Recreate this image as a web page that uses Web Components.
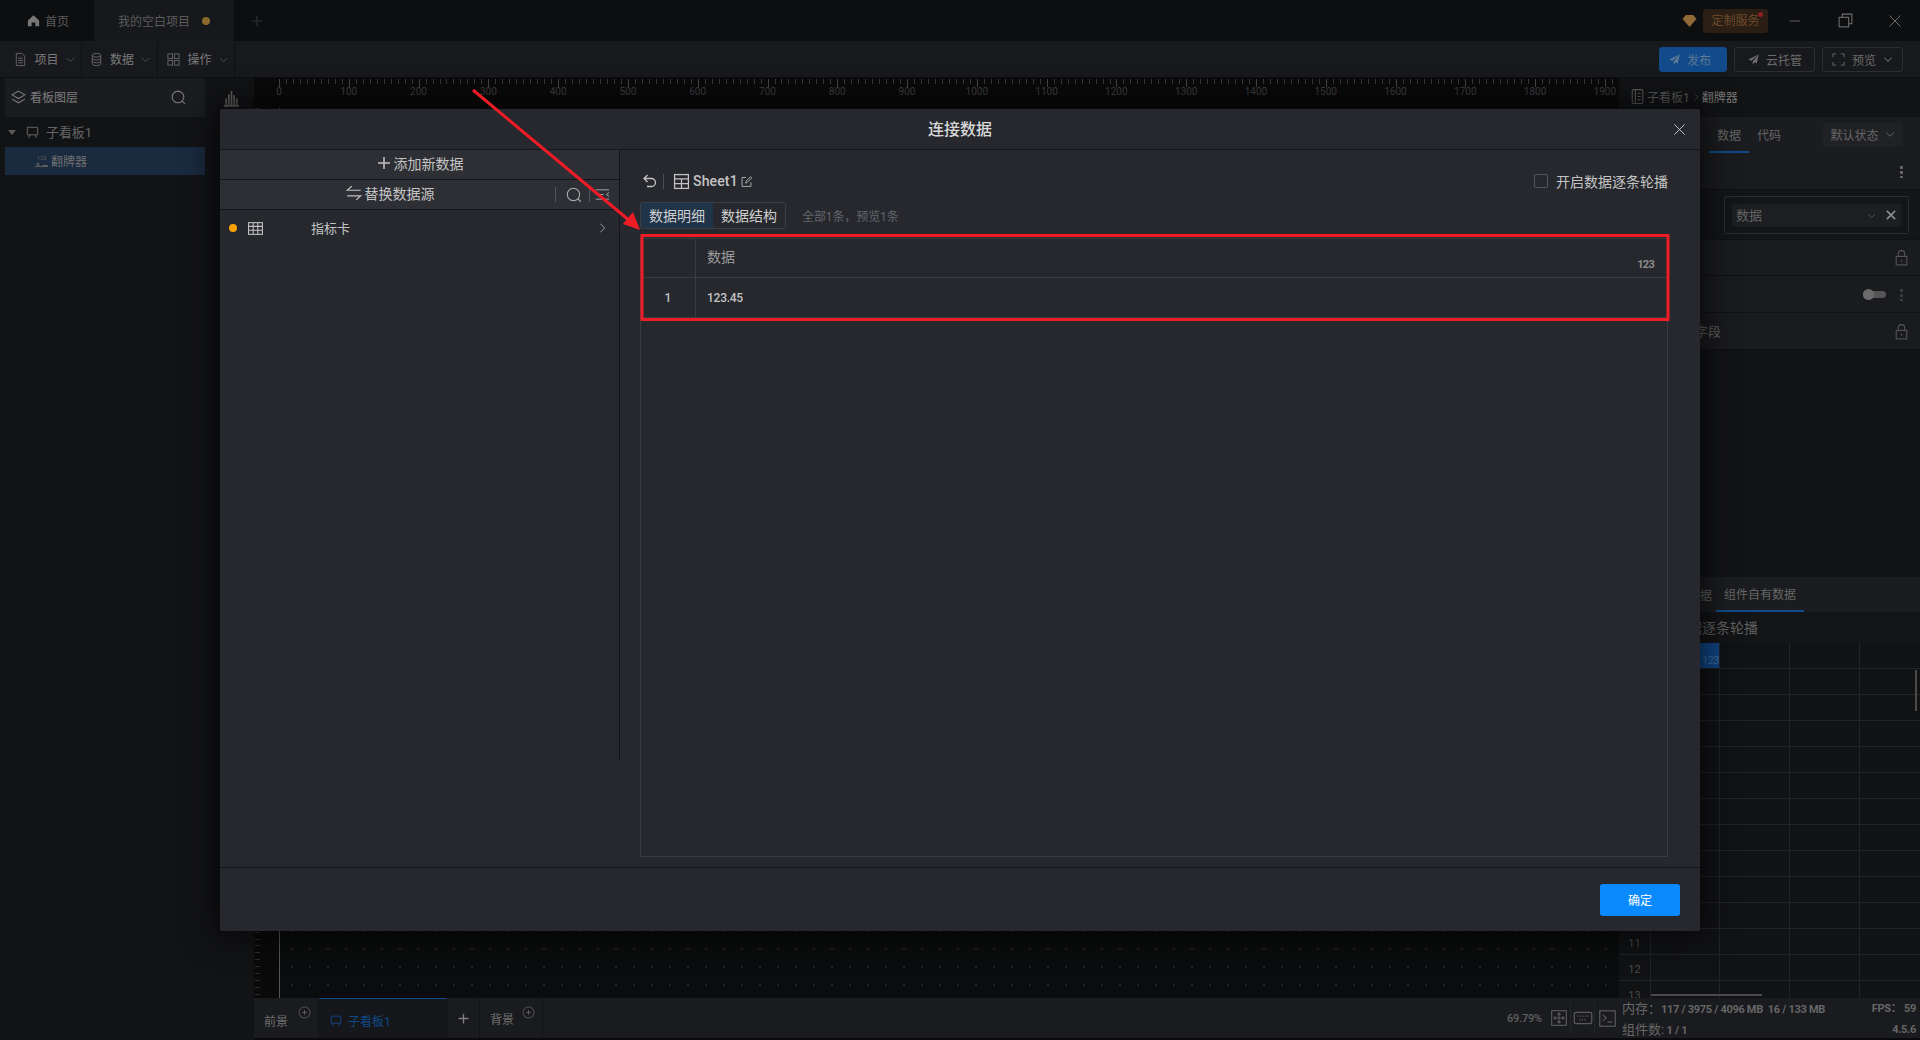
<!DOCTYPE html>
<html lang="zh">
<head>
<meta charset="utf-8">
<title>连接数据</title>
<style>
    html, body { margin:0; height:100%; background:#0b0c0d; overflow:hidden; }
    body { font-family:Roboto,"Noto Sans CJK SC",sans-serif; font-size:12px; color:#777; }
</style>
</head>
<body>
<app-shell></app-shell>
<script>
// ===== ICONS =====
const ICONS = {
    home:'<path d="M2 8 8 2.500 14 8v6h-4v-4H6v4H2z" fill="currentColor" stroke="none"/>',
    file:'<path d="M3.500 1.500h6l3 3v10h-9zM5.500 6.500h5M5.500 9h5M5.500 11.500h5"/>',
    db:'<ellipse cx="8" cy="3.500" rx="4.500" ry="2"/><path d="M3.500 3.500v9c0 1.100 2 2 4.500 2s4.500-.9 4.500-2v-9M3.500 6.500c0 1.100 2 2 4.500 2s4.500-.9 4.500-2M3.500 9.500c0 1.100 2 2 4.500 2s4.500-.9 4.500-2"/>',
    ops:'<rect x="2" y="2" width="5" height="5"/><rect x="9" y="2" width="5" height="5"/><rect x="2" y="9" width="5" height="5"/><rect x="9" y="9" width="5" height="5"/>',
    chev:'<path d="M3 6l5 5 5-5"/>',
    right:'<path d="M6 3l5 5-5 5"/>',
    layers:'<path d="M8 2l6 3.500-6 3.500-6-3.500zM2 9.500l6 3.500 6-3.500"/>',
    search:'<circle cx="7.500" cy="7.500" r="5.500"/><path d="M11.500 11.500l2.500 2.500"/>',
    board:'<path d="M2.500 2.500h11v8h-11zM5 10.500 4 14M11 10.500l1 3.500"/>',
    plus:'<path d="M8 2v12M2 8h12"/>',
    swap:'<path d="M14 5.500H2l4-3.500M2 10.500h12l-4 3.500"/>',
    filter:'<path d="M1 3h14M1 8h8M1 13h14M15 6l-3 2 3 2"/>',
    table:'<rect x="1.500" y="2.500" width="13" height="11"/><path d="M1.500 6h13M1.500 9.700h13M5.800 2.500v11M10.200 2.500v11"/>',
    calc:'<rect x="1.500" y="1.500" width="13" height="13"/><path d="M1.500 5.500h13M1.500 10h13M8 5.500v9"/>',
    back:'<path d="M5.500 2 2 5.500 5.500 9M2 5.500h7.500a3.800 3.800 0 0 1 0 8H5"/>',
    edit:'<path d="M13.500 9v5h-11V3h5M7 10l.5-2.500L13 2l1.500 1.500L9 9z"/>',
    close:'<path d="M2.500 2.500l11 11M13.500 2.500l-11 11"/>',
    min:'<path d="M2 8h12"/>',
    restore:'<rect x="2" y="5" width="9" height="9"/><path d="M5 5V2h9v9h-3"/>',
    plane:'<path d="M14.500 1.500 1.500 8l4 1.500zM14.500 1.500 7 10.500v4l2.500-3 2.500 1.500z" fill="currentColor" stroke="none"/>',
    expand:'<path d="M2 5.500V2h3.500M10.500 2H14v3.500M14 10.500V14h-3.500M5.500 14H2v-3.500"/>',
    lock:'<rect x="3" y="7" width="10" height="8"/><path d="M5 7V4.500a3 3 0 0 1 6 0V7M8 10v2"/>',
    crumb:'<rect x="3" y="1.500" width="10" height="13" rx="1"/><path d="M6 1.500v13M8 5h3M8 8h3M8 11h3"/>',
    bars:'<path d="M1 15h14M3 14V8M5.500 14V4M8 14V1M10.500 14V5M13 14V8" stroke-width="1.600"/>',
    fit:'<rect x="1.500" y="1.500" width="13" height="13"/><path d="M8 3.500v9M3.500 8h9M6.500 5 8 3.500 9.500 5M6.500 11 8 12.500 9.500 11M5 6.500 3.500 8 5 9.500M11 6.500 12.500 8 11 9.500"/>',
    keys:'<rect x="1" y="3.500" width="14" height="9" rx="1.500"/><path d="M3.500 6.500h9M5 9.500h6" stroke-dasharray="1 1"/>',
    term:'<rect x="1.500" y="1.500" width="13" height="13"/><path d="M4 5l3 2.500L4 10M8 11h4"/>',
    circleplus:'<circle cx="8" cy="8" r="6.800"/><path d="M8 5v6M5 8h6"/>'
};

customElements.define('ui-icon', class extends HTMLElement {
    connectedCallback() {
        const size = this.getAttribute('size') || 14;
        const sw = this.getAttribute('sw') || 1;
        this.attachShadow({ mode: 'open' });
        this.shadowRoot.innerHTML = `
            <style>
                :host { display:inline-flex; flex:none; width:${size}px; height:${size}px; }
                svg { width:100%; height:100%; display:block; }
            </style>
            <svg viewBox="0 0 16 16" fill="none" stroke="currentColor" stroke-width="${sw}">${ICONS[this.getAttribute('name')] || ''}</svg>
        `;
    }
});

// ===== TITLE BAR =====
customElements.define('title-bar', class extends HTMLElement {
    connectedCallback() {
        this.attachShadow({ mode: 'open' });
        this.shadowRoot.innerHTML = `
            <style>
                :host { display:flex; align-items:stretch; height:41px; background:#0d0e10; color:#5c5c5c; font-size:12px; }
                .tab { display:flex; align-items:center; }
                .home { width:94px; padding-left:26px; gap:4px; box-sizing:border-box; }
                .home ui-icon { color:#777; }
                .cur { width:140px; background:#17181b; padding-left:24px; gap:12px; box-sizing:border-box; }
                .dot { width:8px; height:8px; border-radius:50%; background:#8a6a2c; }
                .add { width:46px; justify-content:center; color:#2e2f32; }
                .space { flex:1; }
                .right { display:flex; align-items:center; }
                .gem { width:15px; height:15px; margin-right:6px; }
                .custom { position:relative; width:65px; height:24px; box-sizing:border-box; line-height:24px; text-align:center; background:#2a1e15; color:#6f4a28; border-radius:3px; margin-right:2px; }
                .custom i { position:absolute; right:5px; top:3px; width:5px; height:5px; border-radius:50%; background:#8c1f22; }
                .win { color:#707070; display:flex; width:50px; justify-content:center; }
            </style>
            <div class="tab home"><ui-icon name="home" size="15"></ui-icon>首页</div>
            <div class="tab cur">我的空白项目<span class="dot"></span></div>
            <div class="tab add"><ui-icon name="plus" size="14" sw="1.400"></ui-icon></div>
            <div class="space"></div>
            <div class="right">
                <svg class="gem" viewBox="0 0 16 16"><path d="M4 2h8l3.500 4.500L8 15 .5 6.500z" fill="#8f6a36"/></svg>
                <div class="custom">定制服务<i></i></div>
                <div class="win"><ui-icon name="min" size="14"></ui-icon></div>
                <div class="win"><ui-icon name="restore" size="17"></ui-icon></div>
                <div class="win"><ui-icon name="close" size="16"></ui-icon></div>
            </div>
        `;
    }
});

// ===== TOOL BAR =====
customElements.define('tool-bar', class extends HTMLElement {
    connectedCallback() {
        this.attachShadow({ mode: 'open' });
        const menu = (icon, text, w, p) => `<div class="menu" style="width:${w}px;padding-left:${p}px"><ui-icon name="${icon}" size="15"></ui-icon><span>${text}</span><ui-icon class="c" name="chev" size="11"></ui-icon></div>`;
        this.shadowRoot.innerHTML = `
            <style>
                :host { display:flex; align-items:stretch; height:37px; background:#18191c; color:#7a7a7a; font-size:12px; border-bottom:1px solid #0e0f11; box-sizing:border-box; }
                .menu { display:flex; align-items:center; justify-content:center; gap:6px; box-sizing:border-box; border-right:1px solid #101114; }
                .menu ui-icon { color:#666; }
                .menu span { padding-bottom:1px; }
                .space { flex:1; }
                .acts { display:flex; align-items:center; gap:7px; padding-right:17px; }
                .btn { display:flex; align-items:center; justify-content:center; gap:6px; height:25px; box-sizing:border-box; border:1px solid #2c2d31; border-radius:3px; color:#6b6b6b; font-size:12px; }
                .btn.pub { width:68px; background:#124b8c; border-color:#124b8c; color:#5e7892; padding-right:7px; }
                .btn.cloud { width:81px; }
                .btn.view { width:81px; }
            </style>
            ${menu('file', '项目', 82, 8)}${menu('db', '数据', 76, 1)}${menu('ops', '操作', 77, 3)}
            <div class="space"></div>
            <div class="acts">
                <div class="btn pub"><ui-icon name="plane" size="13"></ui-icon>发布</div>
                <div class="btn cloud"><ui-icon name="plane" size="13"></ui-icon>云托管</div>
                <div class="btn view"><ui-icon name="expand" size="15"></ui-icon>预览<ui-icon name="chev" size="12" sw="1.400"></ui-icon></div>
            </div>
        `;
    }
});

// ===== LAYER PANEL =====
customElements.define('layer-panel', class extends HTMLElement {
    connectedCallback() {
        this.attachShadow({ mode: 'open' });
        this.shadowRoot.innerHTML = `
            <style>
                :host { display:block; width:200px; margin-left:5px; background:#121315; color:#666; font-size:12px; }
                .head { display:flex; align-items:center; height:39px; background:#1b1c1f; padding:0 18px 0 5px; gap:3px; color:#7d7d7d; }
                .head span { flex:1; padding-bottom:2px; }
                .row { display:flex; align-items:center; height:28px; gap:6px; padding-left:3px; }
                .row span { padding-bottom:2px; }
                .tri { width:0; height:0; border:4px solid transparent; border-top:5px solid #5a5a5a; border-bottom:0; margin-right:3px; }
                .tree { font-size:13px; letter-spacing:-.1px; margin-top:1px; }
                .sel { background:#1a2a3f; padding-left:30px; gap:3px; color:#707070; margin-top:1px; }
                .num { display:flex; flex-direction:column; align-items:center; width:13px; font-size:6px; line-height:6px; color:#5c5c5c; letter-spacing:-.2px; }
                .num svg { display:block; margin-top:1px; }
            </style>
            <div class="head"><ui-icon name="layers" size="17"></ui-icon><span>看板图层</span><ui-icon name="search" size="17"></ui-icon></div>
            <div class="row tree"><i class="tri"></i><ui-icon name="board" size="15"></ui-icon><span>子看板1</span></div>
            <div class="row sel"><div class="num">123<svg width="13" height="5" viewBox="0 0 13 5"><path d="M0 4.500h13" stroke="#5c5c5c"/><path d="M3 0 1 3.500h4z" fill="#5c5c5c"/><path d="M7 3.500h6" stroke="#5c5c5c"/></svg></div><span>翻牌器</span></div>
        `;
    }
});

// ===== CANVAS + RULER =====
customElements.define('canvas-area', class extends HTMLElement {
    connectedCallback() {
        this.attachShadow({ mode: 'open' });
        let labels = '';
        for (let i = 0; i < 20; i++) labels += `<span>${i * 100}</span>`;
        this.shadowRoot.innerHTML = `
            <style>
                :host { display:flex; min-width:0; background:#121315; }
                .strip { width:49px; flex:none; padding:12px 0 0 18px; box-sizing:border-box; color:#5e5e5e; }
                .main { flex:1; min-width:0; display:flex; flex-direction:column; }
                .ruler { height:30px; flex:none; padding-left:25px; overflow:hidden; display:flex; font-size:10px; color:#3f3f3f;
                    background:
                        repeating-linear-gradient(90deg,#474747 0 1px,transparent 1px 69.79px) 25px 1px/100% 8px no-repeat,
                        repeating-linear-gradient(90deg,#383838 0 1px,transparent 1px 6.979px) 25px 1px/100% 5px no-repeat,
                        #0a0a0b; }
                .ruler span { width:69.79px; flex:none; box-sizing:border-box; padding-top:8px; text-align:center; transform:translateX(-34.9px); }
                .stage { flex:1; min-height:0; display:flex; }
                .vr { width:26px; flex:none; border-right:1px solid #55565a; box-sizing:border-box; background:repeating-linear-gradient(180deg,#2d2d2d 0 1px,transparent 1px 6.979px) 1px 0/5px 100% no-repeat,#0a0a0b; }
                .dots { flex:1; background:radial-gradient(circle,#222 0 .8px,transparent 1px) 3px 4px/18px 18px,#0b0c0d; }
                .tabs { height:42px; flex:none; display:flex; background:#1a1b1e; border-bottom:2px solid #0a0a0b; box-sizing:border-box; font-size:12px; color:#6f6f6f; }
                .tab { position:relative; display:flex; align-items:center; padding-left:10px; box-sizing:border-box; border-right:1px solid #121315; }
                .tab ui-icon.p { position:absolute; right:7px; top:8px; color:#666; }
                .fg { width:65px; padding-top:4px; }
                .board { width:128px; color:#104a88; background:#15171a; border-top:1px solid #104a88; gap:5px; padding-top:4px; }
                .add { width:33px; padding:0; justify-content:center; color:#808080; }
                .bg { width:63px; }
                .space { flex:1; }
                .zoom { display:flex; align-items:center; font-size:11px; color:#606060; }
                .zoom ui-icon { color:#5a5a5a; }
                .zoom .i { display:flex; align-items:center; justify-content:center; height:30px; width:24px; border-right:1px solid #24252a; box-sizing:border-box; }
                .zoom .i:last-child { border:0; }
                .zoom b { font-weight:500; margin-right:5px; letter-spacing:-.2px; }
            </style>
            <div class="strip"><ui-icon name="bars" size="17"></ui-icon></div>
            <div class="main">
                <div class="ruler">${labels}</div>
                <div class="stage"><div class="vr"></div><div class="dots"></div></div>
                <div class="tabs">
                    <div class="tab fg">前景<ui-icon class="p" name="circleplus" size="13"></ui-icon></div>
                    <div class="tab board"><ui-icon name="board" size="14"></ui-icon>子看板1</div>
                    <div class="tab add"><ui-icon name="plus" size="13" sw="1.600"></ui-icon></div>
                    <div class="tab bg">背景<ui-icon class="p" name="circleplus" size="13"></ui-icon></div>
                    <div class="space"></div>
                    <div class="zoom"><b>69.79%</b><div class="i"><ui-icon name="fit" size="18"></ui-icon></div><div class="i"><ui-icon name="keys" size="20"></ui-icon></div><div class="i"><ui-icon name="term" size="19"></ui-icon></div></div>
                </div>
            </div>
        `;
    }
});

// ===== PROP PANEL =====
customElements.define('prop-panel', class extends HTMLElement {
    connectedCallback() {
        this.attachShadow({ mode: 'open' });
        let rows = '';
        for (let i = 1; i <= 13; i++) {
            rows += `<div class="r"><div class="n">${i >= 11 ? i : ''}</div><div class="c"></div><div class="c"></div><div class="c"></div></div>`;
        }
        this.shadowRoot.innerHTML = `
            <style>
                :host { display:flex; flex-direction:column; width:301px; flex:none; background:#121315; color:#666; font-size:12px; }
                .crumb { height:39px; flex:none; display:flex; align-items:center; padding-left:10px; gap:1px; color:#5c5c5c; padding-bottom:2px; box-sizing:border-box; }
                .crumb b { font-weight:400; color:#777; }
                .tabs { height:36px; flex:none; display:flex; align-items:stretch; background:#1b1c1f; padding-left:90px; padding-right:17px; box-sizing:border-box; }
                .tabs div { width:40px; display:flex; align-items:center; justify-content:center; box-sizing:border-box; padding-bottom:2px; }
                .tabs .on { border-bottom:2px solid #114a8b; padding-bottom:0; }
                .tabs .sel { margin-left:auto; width:80px; height:24px; margin-top:6px; background:#202124; border-radius:2px; gap:5px; }
                .row { display:flex; align-items:center; justify-content:flex-end; height:37px; box-sizing:border-box; padding-right:17px; background:#1a1b1e; border-bottom:1px solid #101114; color:#555; gap:6px; }
                .row.lk { padding-right:10px; }
                .row.data { height:50px; background:#141518; padding-right:11px; }
                .row .tx { margin-right:auto; padding:0 0 2px 76px; font-size:13px; color:#606060; }
                .keb { width:3px; height:13px; background:radial-gradient(circle,#666 0 1.400px,transparent 1.500px) 0 0/3px 5px; }
                .keb.dim { opacity:.45; }
                .tog { width:23px; height:7px; border-radius:4px; background:#555; position:relative; margin-right:8px; }
                .tog i { position:absolute; left:0; top:-2px; width:11px; height:11px; border-radius:50%; background:#6c6c6c; }
                .box { width:185px; height:38px; box-sizing:border-box; border:1px solid #2b2c30; border-radius:2px; padding:7px; }
                .inp { height:23px; background:#1d1e21; border-radius:2px; display:flex; align-items:center; padding:0 4px; color:#666; gap:8px; font-size:13px; }
                .inp span { flex:1; padding-bottom:2px; }
                .inp .xx { color:#8c9096; }
                .fill { flex:1; min-height:0; }
                .sub { height:35px; flex:none; display:flex; align-items:stretch; background:#1b1c1f; font-size:12px; padding-left:69px; }
                .sub div { display:flex; align-items:center; box-sizing:border-box; }
                .sub .a { width:28px; }
                .sub .on { width:88px; padding-left:8px; border-bottom:2px solid #114a8b; }
                .lab { height:31px; flex:none; display:flex; align-items:center; padding:0 0 2px 27px; box-sizing:border-box; font-size:14px; color:#606060; background:#131416; }
                .sheet { height:355px; flex:none; position:relative; overflow:hidden; background:#111214; }
                .h, .r { display:grid; grid-template-columns:32px 69px 70px 70px 60px; height:26px; box-sizing:border-box; border-bottom:1px solid #222326; }
                .r { grid-template-columns:32px 69px 70px 70px; }
                .r > div, .h > div { border-right:1px solid #222326; box-sizing:border-box; }
                .n { color:#4b4b4b; font-size:11px; line-height:29px; text-align:center; }
                .blue { background:#0f4584; color:#3f6d9f; font-size:11px; line-height:35px; text-align:right; letter-spacing:-.5px; overflow:hidden; }
                .sbv { position:absolute; right:3px; top:27px; width:2px; height:41px; background:#4a4a4a; }
                .sbh { position:absolute; left:32px; top:351px; width:111px; height:2px; background:#4a4a4a; }
                .stat { height:42px; flex:none; box-sizing:border-box; background:#1a1b1e; padding:1px 4px 0 3px; font-size:11px; color:#666; border-bottom:2px solid #0a0a0b; }
                .stat div { display:flex; justify-content:space-between; height:21px; line-height:20px; font-weight:700; letter-spacing:-.3px; white-space:nowrap; }
                .stat em { font-style:normal; font-weight:400; font-size:13px; letter-spacing:0; }
            </style>
            <div class="crumb"><ui-icon name="crumb" size="17"></ui-icon>子看板1<ui-icon name="right" size="10"></ui-icon><b>翻牌器</b></div>
            <div class="tabs"><div class="on">数据</div><div>代码</div><div class="sel">默认状态<ui-icon name="chev" size="12" sw="1.300"></ui-icon></div></div>
            <div class="row"><i class="keb"></i></div>
            <div class="row data"><div class="box"><div class="inp"><span>数据</span><ui-icon name="chev" size="11"></ui-icon><ui-icon class="xx" name="close" size="12" sw="2"></ui-icon></div></div></div>
            <div class="row lk" style="height:36px"><ui-icon name="lock" size="17"></ui-icon></div>
            <div class="row"><span class="tog"><i></i></span><i class="keb dim"></i></div>
            <div class="row lk"><span class="tx">字段</span><ui-icon name="lock" size="17"></ui-icon></div>
            <div class="fill"></div>
            <div class="sub"><div class="a">数据</div><div class="on">组件自有数据</div></div>
            <div class="lab">开启数据逐条轮播</div>
            <div class="sheet">
                <div class="h"><div></div><div class="blue">123</div><div></div><div></div><div style="border:0"></div></div>
                ${rows}
                <i class="sbv"></i><i class="sbh"></i>
            </div>
            <div class="stat">
                <div><span><em>内存：</em>117 / 3975 / 4096 MB&nbsp;&nbsp;16 / 133 MB</span><span>FPS： 59</span></div>
                <div><span><em>组件数:</em> 1 / 1</span><span>4.5.6</span></div>
            </div>
        `;
    }
});

// ===== MODAL =====
customElements.define('data-modal', class extends HTMLElement {
    connectedCallback() {
        this.attachShadow({ mode: 'open' });
        this.shadowRoot.innerHTML = `
            <style>
                :host { position:absolute; left:220px; top:109px; width:1480px; height:822px; display:flex; flex-direction:column; background:#26282d; color:#c4c4c4; font-size:14px; border-radius:2px; box-shadow:0 0 32px 6px rgba(0,0,0,.65); }
                .top { height:41px; flex:none; display:flex; align-items:center; justify-content:center; position:relative; border-bottom:1px solid #15161a; box-sizing:border-box; padding-bottom:2px; font-size:16px; font-weight:500; color:#d8d8d8; }
                .x { position:absolute; right:13px; top:13px; color:#ccc; }
                .body { flex:1; min-height:0; display:flex; }
                .left { width:400px; flex:none; height:610px; box-sizing:border-box; border-right:1px solid #15161a; }
                .bar { height:30px; box-sizing:border-box; display:flex; align-items:center; justify-content:center; gap:2px; background:#2d2f34; border-bottom:1px solid #15161a; position:relative; padding-bottom:3px; }
                .bar.rep { padding-right:60px; }
                .tools { position:absolute; left:335px; top:0; height:100%; display:flex; align-items:center; color:#aaa; }
                .tools s { width:1px; height:15px; background:#55565a; }
                .tools ui-icon:nth-child(2) { margin:0 6px 0 9px; }
                .tools ui-icon:nth-child(4) { margin-left:5px; }
                .item { display:flex; align-items:center; height:36px; padding-left:9px; }
                .dot { width:8px; height:8px; border-radius:50%; background:#f7a200; margin-right:10px; }
                .item .nm { margin-left:47px; flex:1; font-size:13px; padding-bottom:2px; }
                .item .ch { margin-right:10px; color:#aaa; }
                .right { flex:1; min-width:0; padding:20px 32px 10px 20px; display:flex; flex-direction:column; box-sizing:border-box; }
                .crumb { display:flex; align-items:center; height:22px; padding-left:2px; color:#c4c4c4; }
                .crumb s { width:1px; height:15px; background:#4c4d52; margin:0 9px 0 5px; }
                .crumb b { font-weight:500; font-size:14px; margin:0 2px 0 3px; letter-spacing:.15px; }
                .crumb .ck { margin-left:auto; display:flex; align-items:center; gap:8px; padding-bottom:1px; }
                .ck i { width:12px; height:12px; border:1px solid #55565a; border-radius:2px; }
                .seg { display:flex; align-items:center; margin-top:10px; height:27px; }
                .seg .g { display:flex; height:27px; box-sizing:border-box; border:1px solid #3d3e43; border-radius:2px; color:#cfcfcf; }
                .seg .g div { width:72px; display:flex; align-items:center; justify-content:center; padding-bottom:1px; box-sizing:border-box; }
                .seg .g .on { background:#1f3349; }
                .seg span { margin-left:16px; color:#64666b; font-size:12px; letter-spacing:-.1px; }
                .tbl { flex:1; margin-top:9px; box-sizing:border-box; border:1px solid #3b3c41; }
                .tr { display:flex; box-sizing:border-box; }
                .tr.th { height:39px; border-bottom:1px solid #3b3c41; color:#9b9b9b; }
                .tr.td { height:40px; border-bottom:1px solid #3b3c41; font-weight:500; }
                .c0 { width:54px; flex:none; border-right:1px solid #3b3c41; display:flex; align-items:center; justify-content:center; font-size:12px; }
                .c1 { flex:1; display:flex; align-items:center; padding:0 0 4px 11px; position:relative; }
                .td .c1 { font-size:12px; letter-spacing:-.25px; padding-bottom:0; }
                .ty { position:absolute; right:13px; top:19px; font-size:11px; font-weight:700; color:#8c8c90; letter-spacing:-.7px; }
                .foot { height:64px; flex:none; display:flex; align-items:center; justify-content:flex-end; padding-right:20px; border-top:1px solid #15161a; box-sizing:border-box; }
                .ok { width:80px; height:32px; border-radius:3px; background:#0a8afc; color:#fff; display:flex; align-items:center; justify-content:center; font-size:12px; padding-bottom:1px; box-sizing:border-box; }
            </style>
            <div class="top">连接数据<ui-icon class="x" name="close" size="15"></ui-icon></div>
            <div class="body">
                <div class="left">
                    <div class="bar add"><ui-icon name="plus" size="16" sw="1.500"></ui-icon>添加新数据</div>
                    <div class="bar rep"><ui-icon name="swap" size="18"></ui-icon>替换数据源
                        <div class="tools"><s></s><ui-icon name="search" size="18"></ui-icon><s></s><ui-icon name="filter" size="15"></ui-icon></div>
                    </div>
                    <div class="item"><i class="dot"></i><ui-icon name="table" size="17"></ui-icon><span class="nm">指标卡</span><ui-icon class="ch" name="right" size="14"></ui-icon></div>
                </div>
                <div class="right">
                    <div class="crumb"><ui-icon name="back" size="16" sw="1.300"></ui-icon><s></s><ui-icon name="calc" size="17" sw="1.200"></ui-icon><b>Sheet1</b><ui-icon name="edit" size="13"></ui-icon>
                        <div class="ck"><i></i>开启数据逐条轮播</div></div>
                    <div class="seg"><div class="g"><div class="on">数据明细</div><div>数据结构</div></div><span>全部1条，预览1条</span></div>
                    <div class="tbl">
                        <div class="tr th"><div class="c0"></div><div class="c1">数据<span class="ty">123</span></div></div>
                        <div class="tr td"><div class="c0">1</div><div class="c1">123.45</div></div>
                    </div>
                </div>
            </div>
            <div class="foot"><div class="ok">确定</div></div>
        `;
    }
});

// ===== ANNOTATION (red arrow + red box over the shot) =====
customElements.define('shot-annotation', class extends HTMLElement {
    connectedCallback() {
        this.attachShadow({ mode: 'open' });
        this.shadowRoot.innerHTML = `
            <style>
                :host { position:absolute; left:0; top:0; width:1920px; height:1040px; pointer-events:none; }
                svg { display:block; }
            </style>
            <svg width="1920" height="1040" viewBox="0 0 1920 1040">
                <path d="M473 90 630 221" stroke="#ee1c25" stroke-width="3" fill="none"/>
                <path d="M640 230 623 224 633 212z" fill="#ee1c25"/>
                <rect x="642" y="235.500" width="1026" height="84" fill="none" stroke="#ee1c25" stroke-width="3"/>
            </svg>
        `;
    }
});

// ===== SHELL =====
customElements.define('app-shell', class extends HTMLElement {
    connectedCallback() {
        this.attachShadow({ mode: 'open' });
        this.shadowRoot.innerHTML = `
            <style>
                :host { display:flex; flex-direction:column; width:1920px; height:1040px; position:relative; overflow:hidden; }
                .work { flex:1; min-height:0; display:flex; background:#121315; }
                canvas-area { flex:1; min-width:0; }
            </style>
            <title-bar></title-bar>
            <tool-bar></tool-bar>
            <div class="work">
                <layer-panel></layer-panel>
                <canvas-area></canvas-area>
                <prop-panel></prop-panel>
            </div>
            <data-modal></data-modal>
            <shot-annotation></shot-annotation>
        `;
    }
});
</script>
</body>
</html>
